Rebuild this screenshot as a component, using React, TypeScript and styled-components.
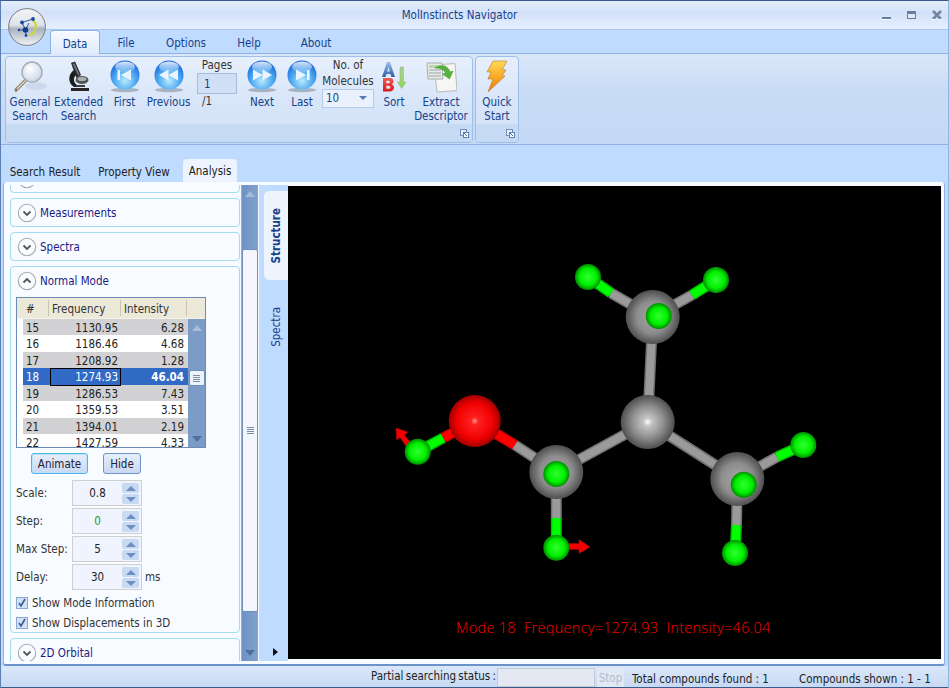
import React from 'react';
import styled, { createGlobalStyle } from 'styled-components';

const Global = createGlobalStyle`
  html, body { margin: 0; padding: 0; overflow: hidden; background: #bfdbff; }
  * { box-sizing: border-box; }
  body { font-family: "DejaVu Sans Condensed", "DejaVu Sans", sans-serif; font-stretch: condensed; font-size: 11.5px; }
`;

const Frame = styled.div`
  position: relative; width: 949px; height: 688px; display: flex; flex-direction: column;
  background: #bfdbff; border-top: 1px solid #3b5b8c; border-left: 1px solid #5b7fb2; border-right: 1px solid #8db2e3; overflow: hidden;
`;
const TitleBar = styled.div`
  height: 29px; flex: none; display: flex; align-items: center; justify-content: center; position: relative;
  background: linear-gradient(#e4eefc 0%, #d2e1f9 45%, #dce8fb 70%, #e6f0fe 100%);
  border-bottom: 1px solid #a9c7ee; color: #15428b; padding-right: 30px;
`;
const WindowControls = styled.div`
  position: absolute; right: 5px; top: 9px; display: flex; gap: 14px; align-items: center;
`;
const OrbWrap = styled.div`
  position: absolute; left: 5px; top: 5px; width: 40px; height: 40px; z-index: 3;
`;
const MenuRow = styled.div`
  height: 23px; flex: none; display: flex; padding-left: 49px; align-items: stretch; position: relative; z-index: 2;
`;
const MenuTab = styled.div<{ $w: number; $active?: boolean }>`
  width: ${p => p.$w}px; display: flex; align-items: center; justify-content: center; padding-top: 2px;
  color: #15428b; border-radius: 4px 4px 0 0;
  ${p => p.$active ? `background: linear-gradient(#f8fbff, #dfeafb); border: 1px solid #8db2e3; border-bottom: none; height: 24px;` : ''}
`;
const Ribbon = styled.div`
  height: 92px; flex: none; display: flex; gap: 2px; padding: 2px 4px;
  background: linear-gradient(#dbe7f9 0%, #c9dcf5 40%, #c4d9f5 100%);
  border-top: 1px solid #8db2e3; border-bottom: 1px solid #8db2e3;
`;
const Group = styled.div<{ $w: number }>`
  width: ${p => p.$w}px; height: 87px; display: flex; flex-direction: column; border: 1px solid #9dbfe9; border-radius: 4px;
  background: linear-gradient(#e6effc 0%, #d9e6f9 50%, #cfe0f7 100%); overflow: hidden;
`;
const GroupBody = styled.div`
  flex: 1; display: flex; padding-left: 2px;
`;
const GroupFooter = styled.div`
  height: 18px; flex: none; background: #c6daf4; display: flex; justify-content: flex-end; align-items: center; padding-right: 3px;
`;
const Item = styled.div<{ $w: number }>`
  width: ${p => p.$w}px; display: flex; flex-direction: column; align-items: center; padding-top: 3px; color: #15428b; line-height: 14px; text-align: center; white-space: nowrap; flex: none;
`;
const IconSlot = styled.div`
  height: 34px; width: 100%; display: flex; align-items: center; justify-content: center; margin-bottom: 1px;
`;
const PagesLabel = styled.div`
  color: #333; height: 15px; line-height: 15px; margin-top: -2px;
`;
const PagesBox = styled.div`
  width: 40px; height: 21px; background: #d0dff3; border: 1px solid #a6bcd8; color: #15428b; padding: 3px 0 0 6px; text-align: left; flex: none;
`;
const PagesTotal = styled.div`
  width: 40px; text-align: left; color: #333; margin-top: 0; padding-left: 5px;
`;
const MolLabel = styled.div`
  color: #333; line-height: 16px; margin-top: -3px;
`;
const Combo = styled.div`
  width: 52px; height: 19px; background: #ebf1fc; border: 1px solid #b5cbe8; color: #15428b; display: flex; justify-content: space-between; align-items: center; padding: 0 6px 2px 3px;
`;
const ComboCaret = styled.div`
  width: 0; height: 0; border-left: 4px solid transparent; border-right: 4px solid transparent; border-top: 4px solid #567db1;
`;
const DocTabs = styled.div`
  height: 37px; flex: none; padding: 14px 0 0 0; display: flex; color: #222;
`;
const DocTab = styled.div<{ $w: number; $ml: number; $active?: boolean }>`
  width: ${p => p.$w}px; margin-left: ${p => p.$ml}px; height: 23px; display: flex; align-items: center; justify-content: center; border-radius: 4px 4px 0 0; padding-top: ${p => p.$active ? 0 : 2}px;
  ${p => p.$active ? 'background: #edf4fe;' : ''}
`;
const Main = styled.div`
  height: 484px; flex: none; margin: 0 3px 0 2px; display: flex; background: #f8fbff; border: 1px solid #8db2e3; border-top: none; border-radius: 3px; padding: 3px 3px 3px 0; border-bottom: 2px solid #6b93c9;
`;
const Sidebar = styled.div`
  width: 237px; flex: none; overflow: hidden; padding-left: 6px; display: flex; flex-direction: column;
`;
const PanelStack = styled.div`
  margin-top: -21px; display: flex; flex-direction: column; gap: 5px; width: 230px;
`;
const Panel = styled.div<{ $h?: number }>`
  border: 1px solid #a3dcee; border-radius: 4px; background: #f8fbff; flex: none; ${p => p.$h ? `height: ${p.$h}px;` : ''}
`;
const PanelHead = styled.div`
  height: 27px; display: flex; align-items: center; gap: 3px; padding-left: 6px; color: #1b1b86; flex: none;
`;
const PanelBody = styled.div`
  padding: 3px 0 0 5px;
`;
const VScroll = styled.div`
  width: 17px; flex: none; display: flex; flex-direction: column; background: linear-gradient(90deg, #6f93c6, #82a2ce); border-left: 1px solid #92aed3;
`;
const ScrollBtn = styled.div`
  height: 17px; flex: none; display: flex; align-items: center; justify-content: center;
`;
const ScrollThumb = styled.div`
  height: 363px; margin-top: 47px; background: #f3f6fc; border: 1px solid #6f8fbf; border-radius: 2px; display: flex; align-items: center; justify-content: center; flex: none;
`;
const Grip = styled.div`
  width: 7px; height: 7px; background: repeating-linear-gradient(#7b8ea8 0 1px, transparent 1px 2px);
`;
const Spacer = styled.div`
  flex: 1;
`;
const Rail = styled.div`
  width: 29px; flex: none; background: #bfdbff; display: flex; flex-direction: column; padding-left: 5px; margin-left: 1px;
`;
const RailTab = styled.div<{ $active?: boolean }>`
  width: 24px; height: ${p => p.$active ? 89 : 94}px; margin-top: ${p => p.$active ? 6 : 0}px; display: flex; align-items: center; justify-content: center; flex: none;
  ${p => p.$active ? 'background: #edf4fe; border-radius: 5px 0 0 5px; font-weight: 700;' : ''} color: #15428b;
`;
const RailLabel = styled.span`
  writing-mode: vertical-rl; transform: rotate(180deg);
`;
const RailArrow = styled.div`
  width: 0; height: 0; border-top: 4px solid transparent; border-bottom: 4px solid transparent; border-left: 5px solid #111; margin: 0 0 5px 9px;
`;
const Viewport = styled.div`
  position: relative; flex: 1; background: #000; margin: 1px 0 2px 0;
`;
const ModeText = styled.div`
  position: absolute; left: 168px; top: 433px; color: #f00; font-size: 14.5px; white-space: pre; line-height: 18px; letter-spacing: .28px;
  font-family: "Open Sans", sans-serif; font-stretch: normal; font-weight: 300;
`;
const Status = styled.div`
  flex: 1; display: flex; align-items: flex-start; padding: 2px 0 0 370px; color: #222; background: linear-gradient(#dae7f9, #c7daf3); border-bottom: 1px solid #3b5b8c;
`;
const StatusText = styled.div<{ $ml?: number; $mt?: number; $w?: number; $tight?: boolean }>`
  margin-left: ${p => p.$ml || 0}px; margin-top: ${p => p.$mt || 0}px; white-space: nowrap; line-height: 16px; ${p => p.$w ? `width: ${p.$w}px;` : ''} flex: none;
  ${p => p.$tight ? 'word-spacing: -1px;' : ''}
`;
const StatusInput = styled.div`
  width: 98px; height: 19px; margin-left: 3px; background: #e3e8f2; border: 1px solid #c3cad6; flex: none;
`;
const StopBtn = styled.div`
  width: 27px; height: 19px; margin-left: 2px; background: #e0e9f6; color: #b4bdca; display: flex; align-items: center; justify-content: center; flex: none;
`;

const GridBox = styled.div`
  width: 190px; height: 151px; border: 1px solid #6a8bb5; overflow: hidden; background: #fff; display: grid; grid-template-columns: 171px 17px; grid-template-rows: 21px 1fr;
`;
const GridHead = styled.div`
  grid-column: 1 / 3; display: grid; grid-template-columns: 6px 26px 72px 66px; background: #ece9d8; color: #333; border-bottom: 1px solid #f4f2e8;
`;
const HeadCell = styled.div<{ $sep?: boolean }>`
  display: flex; align-items: center; padding: 2px 0 0 3px; ${p => p.$sep ? 'box-shadow: inset -1px 0 0 #c8c5b2; margin: 2px 0 3px;' : ''}
`;
const GridBody = styled.div`
  overflow: hidden;
`;
const Row = styled.div<{ $bg: string; $fg: string }>`
  height: 16.45px; display: grid; grid-template-columns: 6px 27px 71px 66px; background: linear-gradient(90deg, #fff 6px, ${p => p.$bg} 6px); color: ${p => p.$fg};
`;
const Cell = styled.div<{ $num?: boolean; $focus?: boolean; $bold?: boolean }>`
  line-height: 18px; padding: 0 3px; white-space: nowrap; text-align: ${p => p.$num ? 'right' : 'left'};
  ${p => p.$focus ? 'outline: 1px solid #000; outline-offset: -1px;' : ''} ${p => p.$bold ? 'font-weight: 700;' : ''}
`;
const GridScroll = styled.div`
  background: #7c9cc8; display: flex; flex-direction: column; align-items: center;
`;
const GridThumb = styled.div`
  width: 16px; height: 16px; margin-top: 34px; background: #eef3fb; border: 1px solid #6f8fbf; border-radius: 2px; display: flex; align-items: center; justify-content: center;
`;
const ButtonRow = styled.div`
  display: flex; gap: 15px; margin: 5px 0 0 15px;
`;
const PushButton = styled.div<{ $w: number; $focus?: boolean }>`
  width: ${p => p.$w}px; height: 21px; border-radius: 3px; display: flex; align-items: center; justify-content: center; color: #223;
  background: linear-gradient(#e6eefb, #c9d9f2);
  border: 1px solid ${p => p.$focus ? '#4fb4ea' : '#7094c9'}; ${p => p.$focus ? 'box-shadow: inset 0 0 0 1px #bde3f8;' : ''}
`;
const SpinList = styled.div`
  display: flex; flex-direction: column; gap: 2px; margin-top: 6px;
`;
const SpinRow = styled.div`
  display: flex; align-items: center; height: 26px; color: #333;
`;
const SpinLabel = styled.div`
  width: 56px; flex: none;
`;
const SpinField = styled.div`
  width: 70px; height: 26px; display: flex; background: #eff4fe; border: 1px solid #cfcfcf; flex: none;
`;
const SpinValue = styled.div<{ $color?: string }>`
  flex: 1; display: flex; align-items: center; justify-content: center; color: ${p => p.$color || '#222'};
`;
const SpinBtns = styled.div`
  width: 18px; flex: none; display: flex; flex-direction: column; gap: 1px; padding: 2px 1px 1px 0; margin-right: 1px;
`;
const SpinBtn = styled.div<{ $down?: boolean }>`
  flex: 1; background: #c8d9f2; border-radius: 2px; display: flex; align-items: center; justify-content: center;
  &::after { content: ''; width: 0; height: 0; border-left: 5px solid transparent; border-right: 5px solid transparent; ${p => p.$down ? 'border-top: 5px solid #6d8fc2;' : 'border-bottom: 5px solid #6d8fc2;'} }
`;
const SpinUnit = styled.div`
  margin-left: 3px;
`;
const CheckList = styled.div`
  display: flex; flex-direction: column; gap: 6px; margin-top: 6px; color: #333;
`;
const CheckRow = styled.div`
  display: flex; align-items: center; gap: 4px; height: 14px;
`;
const CheckBox = styled.div`
  width: 12px; height: 12px; background: #d5e2f6; border: 1px solid #8aa7d0; display: flex; align-items: center; justify-content: center;
`;
const Launcher = () => (
  <svg width="9" height="9" viewBox="0 0 9 9">
    <rect x=".5" y=".5" width="6" height="6" fill="#e8f0fb" stroke="#6e8fbe" />
    <rect x="3.5" y="3.5" width="5" height="5" fill="#fff" stroke="#5f7fae" />
    <path d="M4 4l3 3" stroke="#40618f" />
  </svg>
);

const Chevron = ({ up }: { up?: boolean }) => (
  <svg width="20" height="20" viewBox="0 0 20 20">
    <circle cx="10" cy="10" r="8.7" fill="#f8fbff" stroke="#a9a9a9" strokeWidth="1.1" />
    <path d={up ? 'M6.5 11.5 10 8l3.5 3.5' : 'M6.5 8.5 10 12l3.5-3.5'} fill="none" stroke="#555" strokeWidth="1.8" />
  </svg>
);

const Logo = () => (
  <svg width="40" height="40" viewBox="0 0 40 40">
    <defs>
      <linearGradient id="orb" x1="0" y1="0" x2="0" y2="1">
        <stop offset="0" stopColor="#f2f4f7" />
        <stop offset=".45" stopColor="#dfe3ea" />
        <stop offset=".55" stopColor="#a9b2c0" />
        <stop offset="1" stopColor="#f2f3f5" />
      </linearGradient>
    </defs>
    <circle cx="21" cy="21" r="18.4" fill="url(#orb)" stroke="#7b7e84" strokeWidth="1" />
    <path d="M26 13.500a9 9 0 0 1 -3 16" fill="none" stroke="#cbd83a" strokeWidth="2.200" />
    <path d="M19.500 24 16 16.500 27 13M19.500 24 13 24M19.500 24 20 29.500M19.500 24 23 17" stroke="#2c58a8" strokeWidth="1" fill="none" />
    <circle cx="19.500" cy="24" r="2.800" fill="#123a86" /><circle cx="27" cy="13" r="1.900" fill="#1b4a9c" /><circle cx="16" cy="16.500" r="1.900" fill="#1b4a9c" />
    <circle cx="13" cy="24" r="1.300" fill="#1b4a9c" /><circle cx="20" cy="29.500" r="1.400" fill="#1b4a9c" />
  </svg>
);

const Magnifier = () => (
  <svg width="34" height="34" viewBox="0 0 34 34">
    <defs>
      <radialGradient id="lens" cx=".4" cy=".35" r=".75"><stop offset="0" stopColor="#fff" /><stop offset="1" stopColor="#c4d3e6" /></radialGradient>
    </defs>
    <ellipse cx="23" cy="26" rx="11" ry="4" fill="#c4d3e8" opacity=".7" />
    <path d="M13 20 3 30" stroke="#8c7f66" strokeWidth="3.200" strokeLinecap="round" />
    <path d="M13 20 4 29" stroke="#e3ded2" strokeWidth="1.100" />
    <circle cx="19" cy="12" r="10" fill="url(#lens)" stroke="#a6adb6" strokeWidth="1.500" />
  </svg>
);
const Microscope = () => (
  <svg width="34" height="34" viewBox="0 0 34 34">
    <path d="M9 3l4-1.500 6 13.500-4.500 3z" fill="#2a2a2a" />
    <path d="M10.500 4l2-.800 5 11-1.500 1z" fill="#6f7377" />
    <path d="M12 10C6 14 5.500 23 12 27h6c-6-3-8-8-4-12z" fill="#1c1c1c" />
    <ellipse cx="20" cy="20" rx="6.500" ry="4" fill="#4d5356" />
    <ellipse cx="20" cy="19" rx="4.500" ry="2" fill="#aab1b0" />
    <path d="M14 25h9v2h-9z" fill="#38403c" />
    <rect x="9" y="28" width="18" height="3" fill="#262626" />
  </svg>
);
const NavOrb = ({ kind, id }: { kind: 'first' | 'prev' | 'next' | 'last'; id: string }) => (
  <svg width="32" height="34" viewBox="0 0 32 34">
    <defs>
      <radialGradient id={id} cx=".5" cy=".7" r=".7"><stop offset="0" stopColor="#b7ebff" /><stop offset=".55" stopColor="#4aa6f0" /><stop offset="1" stopColor="#1560d8" /></radialGradient>
      <linearGradient id={id + 's'} x1="0" y1="0" x2="0" y2="1"><stop offset="0" stopColor="#fff" stopOpacity=".85" /><stop offset="1" stopColor="#fff" stopOpacity=".1" /></linearGradient>
    </defs>
    <ellipse cx="16" cy="30" rx="14" ry="2.200" fill="#7c8794" opacity=".55" />
    <circle cx="16" cy="15" r="14.500" fill={`url(#${id})`} />
    <ellipse cx="16" cy="7" rx="10" ry="5.500" fill={`url(#${id}s)`} />
    <g fill="#e9f5ff">
      {kind === 'first' && <><rect x="8.500" y="10" width="2.600" height="10" /><path d="M22 9.500v11l-10-5.500z" /></>}
      {kind === 'prev' && <><path d="M15.500 9.500v11L6 15z" /><path d="M25 9.500v11L15.500 15z" /></>}
      {kind === 'next' && <><path d="M7 9.500v11L16.500 15z" /><path d="M16.500 9.500v11L26 15z" /></>}
      {kind === 'last' && <><rect x="21" y="10" width="2.600" height="10" /><path d="M10 9.500v11l10-5.500z" /></>}
    </g>
  </svg>
);
const SortIcon = () => (
  <svg width="30" height="34" viewBox="0 0 30 34">
    <defs>
      <linearGradient id="sa" x1="0" y1="0" x2="0" y2="1"><stop offset="0" stopColor="#9cc0ee" /><stop offset="1" stopColor="#2a5da8" /></linearGradient>
      <linearGradient id="sg" x1="0" y1="0" x2="0" y2="1"><stop offset="0" stopColor="#a9cf9a" /><stop offset="1" stopColor="#8edb4c" /></linearGradient>
      <linearGradient id="sb" x1="0" y1="0" x2="0" y2="1"><stop offset="0" stopColor="#ee5a50" /><stop offset="1" stopColor="#d81818" /></linearGradient>
    </defs>
    <path d="M3 17 8 2h3l5 15h-3.500l-1-3h-4l-1 3zM8.300 11.500h2.400L9.500 7z" fill="url(#sa)" fillRule="evenodd" />
    <path d="M4 18h6.500c3 0 4 1.500 4 3.400 0 1.300-.8 2.300-1.800 2.800 1.400.5 2.300 1.500 2.300 3.100 0 2.600-1.700 4.200-4.500 4.200H4zm3.300 2.700v2.500h2.300a1.250 1.250 0 0 0 0-2.500zm0 5v3h2.600a1.500 1.500 0 0 0 0-3z" fill="url(#sb)" fillRule="evenodd" />
    <path d="M21 7h3.500v15h2.500l-4.200 6.500-4.300-6.500H21z" fill="url(#sg)" stroke="#8fae84" strokeWidth=".5" />
  </svg>
);
const ExtractIcon = () => (
  <svg width="32" height="34" viewBox="0 0 32 34">
    <path d="M9 5l21-1.500 2 27-20 1.500z" fill="#f6f7f4" stroke="#b7bbb8" />
    <path d="M2 3h15l1 16H3z" fill="#e8ebe8" stroke="#a9aeab" />
    <path d="M4 10h12M4 13h12M4 16h12" stroke="#9ba6a9" />
    <path d="M4 5h12v3H4z" fill="#b9d7a8" />
    <path d="M10 8c6-4 13-3 15 4l3-1-3.500 8-7-5 3-1c-1-3-5-5-10.500-5z" fill="#57b33a" stroke="#3e8f28" strokeWidth=".5" />
  </svg>
);
const Bolt = () => (
  <svg width="26" height="34" viewBox="0 0 26 34">
    <defs>
      <linearGradient id="bolt" x1="0" y1="0" x2="0" y2="1"><stop offset="0" stopColor="#ffd95a" /><stop offset=".6" stopColor="#f6a21c" /><stop offset="1" stopColor="#e5781a" /></linearGradient>
    </defs>
    <path d="M9 1h14l-5 9h4l-4 6h3L4 32l5-13H4l3-7H3z" fill="url(#bolt)" stroke="#b5792b" strokeWidth=".6" />
  </svg>
);
const MiniArrow = ({ down, color }: { down?: boolean; color: string }) => (
  <svg width="10" height="6" viewBox="0 0 10 6"><path d={down ? 'M0 0h10L5 6z' : 'M0 6h10L5 0z'} fill={color} /></svg>
);

type Pt = [number, number];
const offset: Pt = [288, 186];
const C = { top: [652.7, 317], mid: [647.7, 422], left: [556.3, 472], right: [737.3, 479], o: [474.7, 421] } as Record<string, Pt>;
const H = {
  tl: [588, 277], tr: [716, 280], r: [803.3, 445], br: [735, 553], bl: [556.3, 547.7], l: [417.7, 451.7],
  f1: [658.7, 316], f2: [556.3, 474], f3: [743.7, 484.7],
} as Record<string, Pt>;
const GRAY = ['#6f6f6f', '#9a9a9a'];
const GREEN = ['#00c000', '#00ff00'];
const RED = ['#c80000', '#ff0000'];
const bonds: [Pt, Pt, string[]][] = [
  [C.top, [611, 293], GRAY], [[611, 293], H.tl, GREEN],
  [C.top, [692, 295], GRAY], [[692, 295], H.tr, GREEN],
  [C.top, C.mid, GRAY],
  [C.mid, C.left, GRAY], [C.mid, C.right, GRAY],
  [C.o, [515, 445], RED], [[515, 445], C.left, GRAY],
  [C.o, [443, 438], RED], [[443, 438], H.l, GREEN],
  [C.left, [556.3, 518], GRAY], [[556.3, 518], H.bl, GREEN],
  [C.right, [777, 457], GRAY], [[777, 457], H.r, GREEN],
  [C.right, [736.5, 525], GRAY], [[736.5, 525], H.br, GREEN],
];
const Molecule = () => (
  <svg width="653" height="473" viewBox={`${offset[0]} ${offset[1]} 653 473`} style={{ display: 'block' }}>
    <defs>
      <radialGradient id="gGray"><stop offset="0" stopColor="#ffffff" /><stop offset=".16" stopColor="#c4c4c4" /><stop offset=".6" stopColor="#8c8c8c" /><stop offset="1" stopColor="#4e4e4e" /></radialGradient>
      <radialGradient id="gGray2"><stop offset="0" stopColor="#a8a8a8" /><stop offset=".6" stopColor="#8c8c8c" /><stop offset="1" stopColor="#4e4e4e" /></radialGradient>
      <radialGradient id="gRed"><stop offset="0" stopColor="#ff9a9a" /><stop offset=".14" stopColor="#ff2020" /><stop offset=".7" stopColor="#f00000" /><stop offset="1" stopColor="#a00000" /></radialGradient>
      <radialGradient id="gGreen"><stop offset="0" stopColor="#30ff30" /><stop offset=".65" stopColor="#00f000" /><stop offset="1" stopColor="#008c00" /></radialGradient>
    </defs>
    {bonds.map(([a, b, c], i) => (
      <g key={i}>
        <line x1={a[0]} y1={a[1]} x2={b[0]} y2={b[1]} stroke={c[0]} strokeWidth={11} />
        <line x1={a[0]} y1={a[1]} x2={b[0]} y2={b[1]} stroke={c[1]} strokeWidth={8} />
      </g>
    ))}
    <path d="M411 443 404.500 435 408 432 396 428 396.500 440 400 437.500 406 446z" fill="#f00000" stroke="#a00000" strokeWidth=".5" />
    <path d="M568 543.500h11v-4l11 7.500-11 6.500v-4h-11z" fill="#f00000" stroke="#b00000" strokeWidth=".5" />
    {[C.top, C.left, C.right].map((p, i) => <circle key={i} cx={p[0]} cy={p[1]} r={27} fill="url(#gGray2)" />)}
    <circle cx={C.mid[0]} cy={C.mid[1]} r={27} fill="url(#gGray)" />
    <circle cx={C.o[0]} cy={C.o[1]} r={26} fill="url(#gRed)" />
    {Object.values(H).map((p, i) => <circle key={i} cx={p[0]} cy={p[1]} r={13} fill="url(#gGreen)" />)}
  </svg>
);

const modes = [
  ['15', '1130.95', '6.28'], ['16', '1186.46', '4.68'], ['17', '1208.92', '1.28'], ['18', '1274.93', '46.04'],
  ['19', '1286.53', '7.43'], ['20', '1359.53', '3.51'], ['21', '1394.01', '2.19'], ['22', '1427.59', '4.33'],
];
const spins = [
  { label: 'Scale:', value: '0.8' },
  { label: 'Step:', value: '0', color: '#1f9a1f' },
  { label: 'Max Step:', value: '5' },
  { label: 'Delay:', value: '30', unit: 'ms' },
];

export default function App() {
  return (
    <Frame>
      <Global />
      <OrbWrap><Logo /></OrbWrap>
      <TitleBar>
        MolInstincts Navigator
        <WindowControls>
          <svg width="9" height="9" viewBox="0 0 9 9"><rect y="6" width="9" height="2" fill="#667f9f" /><rect y="8" width="9" height="1" fill="#fff" /></svg>
          <svg width="10" height="9" viewBox="0 0 10 9" style={{ marginLeft: 2 }}><rect x=".5" y=".5" width="8" height="7" fill="#dfe9fa" stroke="#667f9f" /><rect x="1" y="1" width="7" height="2" fill="#667f9f" /></svg>
          <svg width="11" height="10" viewBox="0 0 11 10" style={{ marginLeft: 1 }}><path d="M1 1l8 8M9 1 1 9" stroke="#7185a3" strokeWidth="2.600" /><path d="M0 9.500h3M7 9.500h3" stroke="#fff" /></svg>
        </WindowControls>
      </TitleBar>
      <MenuRow>
        <MenuTab $w={50} $active>Data</MenuTab>
        <MenuTab $w={52}>File</MenuTab>
        <MenuTab $w={68}>Options</MenuTab>
        <MenuTab $w={58}>Help</MenuTab>
        <MenuTab $w={76}>About</MenuTab>
      </MenuRow>
      <Ribbon>
        <Group $w={468}>
          <GroupBody>
            <Item $w={44}><IconSlot><Magnifier /></IconSlot>General<br />Search</Item>
            <Item $w={53}><IconSlot><Microscope /></IconSlot>Extended<br />Search</Item>
            <Item $w={39}><IconSlot><NavOrb kind="first" id="n1" /></IconSlot>First</Item>
            <Item $w={49}><IconSlot><NavOrb kind="prev" id="n2" /></IconSlot>Previous</Item>
            <Item $w={48}>
              <PagesLabel>Pages</PagesLabel>
              <PagesBox>1</PagesBox>
              <PagesTotal>/1</PagesTotal>
            </Item>
            <Item $w={42}><IconSlot><NavOrb kind="next" id="n3" /></IconSlot>Next</Item>
            <Item $w={38}><IconSlot><NavOrb kind="last" id="n4" /></IconSlot>Last</Item>
            <Item $w={54}>
              <MolLabel>No. of<br />Molecules</MolLabel>
              <Combo>10<ComboCaret /></Combo>
            </Item>
            <Item $w={38}><IconSlot><SortIcon /></IconSlot>Sort</Item>
            <Item $w={56}><IconSlot><ExtractIcon /></IconSlot>Extract<br />Descriptor</Item>
          </GroupBody>
          <GroupFooter><Launcher /></GroupFooter>
        </Group>
        <Group $w={44}>
          <GroupBody>
            <Item $w={38}><IconSlot><Bolt /></IconSlot>Quick<br />Start</Item>
          </GroupBody>
          <GroupFooter><Launcher /></GroupFooter>
        </Group>
      </Ribbon>
      <DocTabs>
        <DocTab $w={78} $ml={5}>Search Result</DocTab>
        <DocTab $w={82} $ml={9}>Property View</DocTab>
        <DocTab $w={54} $ml={8} $active>Analysis</DocTab>
      </DocTabs>
      <Main>
        <Sidebar>
          <PanelStack>
            <Panel $h={29}><PanelHead><Chevron /></PanelHead></Panel>
            <Panel $h={29}><PanelHead><Chevron />Measurements</PanelHead></Panel>
            <Panel $h={29}><PanelHead><Chevron />Spectra</PanelHead></Panel>
            <Panel $h={367}>
              <PanelHead><Chevron up />Normal Mode</PanelHead>
              <PanelBody>
                <GridBox>
                  <GridHead>
                    <HeadCell />
                    <HeadCell $sep>#</HeadCell>
                    <HeadCell $sep>Frequency</HeadCell>
                    <HeadCell $sep>Intensity</HeadCell>
                  </GridHead>
                  <GridBody>
                    {modes.map(m => {
                      const sel = m[0] === '18';
                      const idx = Number(m[0]);
                      const bg = sel ? '#316ac5' : idx % 2 === 1 ? '#d2d2d4' : '#ffffff';
                      return (
                        <Row key={m[0]} $bg={bg} $fg={sel ? '#fff' : '#222'}>
                          <div />
                          <Cell>{m[0]}</Cell>
                          <Cell $num $focus={sel}>{m[1]}</Cell>
                          <Cell $num $bold={sel}>{m[2]}</Cell>
                        </Row>
                      );
                    })}
                  </GridBody>
                  <GridScroll>
                    <ScrollBtn><MiniArrow color="#a9bcd8" /></ScrollBtn>
                    <GridThumb><Grip /></GridThumb>
                    <Spacer />
                    <ScrollBtn><MiniArrow down color="#4f6f9f" /></ScrollBtn>
                  </GridScroll>
                </GridBox>
                <ButtonRow>
                  <PushButton $w={57} $focus>Animate</PushButton>
                  <PushButton $w={38}>Hide</PushButton>
                </ButtonRow>
                <SpinList>
                  {spins.map(s => (
                    <SpinRow key={s.label}>
                      <SpinLabel>{s.label}</SpinLabel>
                      <SpinField>
                        <SpinValue $color={s.color}>{s.value}</SpinValue>
                        <SpinBtns><SpinBtn /><SpinBtn $down /></SpinBtns>
                      </SpinField>
                      {s.unit && <SpinUnit>{s.unit}</SpinUnit>}
                    </SpinRow>
                  ))}
                </SpinList>
                <CheckList>
                  {['Show Mode Information', 'Show Displacements in 3D'].map(t => (
                    <CheckRow key={t}>
                      <CheckBox>
                        <svg width="10" height="10" viewBox="0 0 10 10"><path d="M2 5l2 3 4-7" fill="none" stroke="#3a5f9c" strokeWidth="1.700" /></svg>
                      </CheckBox>
                      {t}
                    </CheckRow>
                  ))}
                </CheckList>
              </PanelBody>
            </Panel>
            <Panel $h={40}><PanelHead><Chevron />2D Orbital</PanelHead></Panel>
          </PanelStack>
        </Sidebar>
        <VScroll>
          <ScrollBtn><MiniArrow color="#a5bbd9" /></ScrollBtn>
          <ScrollThumb><Grip /></ScrollThumb>
          <Spacer />
          <ScrollBtn><MiniArrow down color="#4f6f9f" /></ScrollBtn>
        </VScroll>
        <Rail>
          <RailTab $active><RailLabel>Structure</RailLabel></RailTab>
          <RailTab><RailLabel>Spectra</RailLabel></RailTab>
          <Spacer />
          <RailArrow />
        </Rail>
        <Viewport>
          <Molecule />
          <ModeText>Mode 18  Frequency=1274.93  Intensity=46.04</ModeText>
        </Viewport>
      </Main>
      <Status>
        <StatusText $w={123} $tight>Partial searching status :</StatusText>
        <StatusInput />
        <StopBtn>Stop</StopBtn>
        <StatusText $ml={8} $mt={3} $w={137}>Total compounds found : 1</StatusText>
        <StatusText $ml={30} $mt={3}>Compounds shown : 1 - 1</StatusText>
      </Status>
    </Frame>
  );
}
